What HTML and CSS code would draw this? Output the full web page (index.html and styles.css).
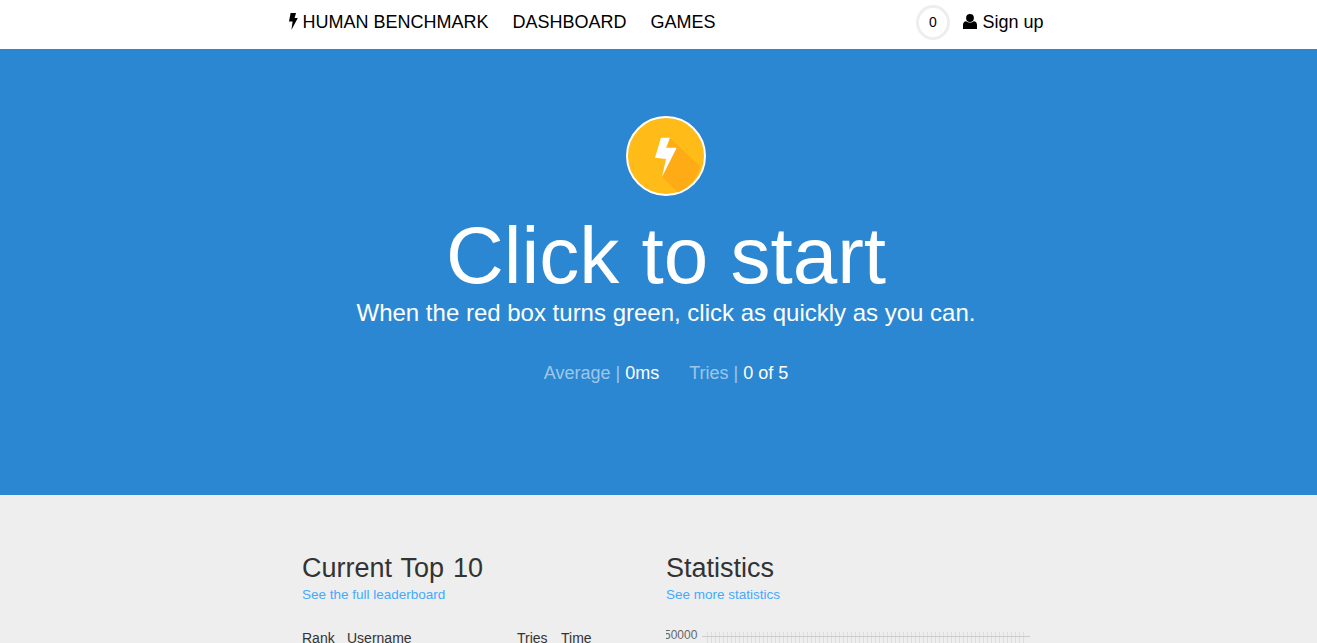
FILE: index.html
```html
<!DOCTYPE html>
<html lang="en">
  <head>
    <meta charset="UTF-8" />
    <title>Reaction Time Test</title>
    <link rel="stylesheet" href="styles.css">
  </head>
  <body>
    <nav class="navbar">
      <div class="nav-inner">
        <div class="nav-links">
          <a class="brand" href="#">
            <svg class="bolt-small" viewBox="0 0 10 17"><path d="M2.6 0H8L6.6 5H9.8L3.4 17 4.6 8.4H1Z"/></svg>
            HUMAN BENCHMARK
          </a>
          <a href="#">DASHBOARD</a>
          <a href="#">GAMES</a>
        </div>
        <div class="nav-user">
          <div class="badge">0</div>
          <a href="#">
            <svg class="user-icon" viewBox="0 0 14 15"><circle cx="7" cy="4" r="3.9"/><path d="M0 15V10.8C0 8.8 1.3 7.2 3.2 7.2 4.2 8 5.5 8.5 7 8.5S9.8 8 10.8 7.2C12.7 7.2 14 8.8 14 10.8V15Z"/></svg>
            Sign up
          </a>
        </div>
      </div>
    </nav>

    <section class="hero">
      <svg class="logo" viewBox="0 0 80 80">
        <circle cx="40" cy="40" r="39" fill="#ffbb17" stroke="#fff" stroke-width="2"/>
        <path d="M44 22 73.6 50A38 38 0 0 1 52 76.4L36 61Z" fill="#ffab16"/>
        <path d="M35 21.7H44L40 31.7H50.7L36 61 40 43 29 41.7Z" fill="#fff"/>
      </svg>
      <h1>Click to start</h1>
      <p class="lead">When the red box turns green, click as quickly as you can.</p>
      <div class="scores">
        <span><span class="dim">Average |</span> 0ms</span>
        <span><span class="dim">Tries |</span> 0 of 5</span>
      </div>
    </section>

    <section class="panels">
      <div class="panel">
        <h2>Current Top 10</h2>
        <a class="more" href="#">See the full leaderboard</a>
        <table class="top">
          <tr>
            <th class="rank">Rank</th>
            <th class="user">Username</th>
            <th class="tries">Tries</th>
            <th>Time</th>
          </tr>
        </table>
      </div>
      <div class="panel">
        <h2>Statistics</h2>
        <a class="more" href="#">See more statistics</a>
        <div class="chart">
          <span class="chart-label">50000</span>
          <div class="chart-grid"></div>
        </div>
      </div>
    </section>
  </body>
</html>
```

FILE: styles.css
```css
html,
body {
  height: 643px;
  overflow: hidden;
}
body {
  margin: 0;
  font-family: "Liberation Sans", Arial, sans-serif;
  background-color: #eeeeee;
  color: #333333;
}
a {
  color: inherit;
  text-decoration: none;
}
.navbar {
  height: 49px;
  background: white;
}
.nav-inner {
  width: 756px;
  margin: 0 auto;
  padding-left: 14px;
  height: 44px;
  display: flex;
  align-items: center;
  justify-content: space-between;
  font-size: 18px;
  color: black;
}
.nav-links {
  display: flex;
  gap: 24px;
}
.bolt-small {
  width: 10px;
  height: 17px;
  vertical-align: -2px;
}
.nav-user {
  display: flex;
  align-items: center;
  gap: 13px;
}
.badge {
  box-sizing: border-box;
  width: 34px;
  height: 35px;
  padding-right: 1px;
  border: 3px solid #eeeeee;
  border-radius: 50%;
  font-size: 14px;
  display: flex;
  align-items: center;
  justify-content: center;
}
.user-icon {
  width: 14px;
  height: 15px;
  vertical-align: -1px;
}
.hero {
  height: 446px;
  background-color: #2b87d1;
  color: white;
  text-align: center;
  box-sizing: border-box;
  padding: 67px 0 0 15px;
}
.logo {
  display: block;
  width: 80px;
  height: 80px;
  margin: 0 auto;
}
.hero h1 {
  margin: 20px 0 0;
  font-size: 80px;
  font-weight: normal;
  line-height: 80px;
}
.lead {
  margin: 0;
  font-size: 24px;
  line-height: 34px;
}
.scores {
  margin-top: 30px;
  font-size: 18px;
  line-height: 26px;
  display: flex;
  justify-content: center;
  gap: 30px;
}
.dim {
  color: rgba(255, 255, 255, 0.55);
}
.panels {
  width: 728px;
  margin: 0 auto;
  padding: 55px 0 0 15px;
  display: flex;
}
.panel {
  width: 364px;
}
.panel h2 {
  margin: 0;
  font-size: 27px;
  font-weight: normal;
  line-height: 36px;
  word-spacing: 1.5px;
}
.more {
  display: block;
  padding-top: 1px;
  color: #44aaff;
  font-size: 13.5px;
  line-height: 16px;
}
.top {
  margin-top: 27px;
  border-collapse: collapse;
  font-size: 14px;
}
.top th {
  padding: 0;
  font-weight: normal;
  text-align: left;
}
.rank {
  width: 45px;
}
.user {
  width: 170px;
}
.tries {
  width: 44px;
}
/* label is cut on the left, like in the real chart */
.chart {
  margin-top: 25px;
  display: flex;
  align-items: flex-start;
  gap: 5px;
  overflow: hidden;
  font-size: 12px;
  line-height: 14px;
  color: #666666;
}
.chart-label {
  margin-left: -2px;
}
.chart-grid {
  width: 328px;
  height: 40px;
  margin-top: 4px;
  background-image:
    linear-gradient(#cccccc, #cccccc),
    repeating-linear-gradient(to right, #dddddd 0, #dddddd 1px, transparent 1px, transparent 4px);
  background-size: 100% 1px, 318px 100%;
  background-position: 0 4px, 5px 0;
  background-repeat: no-repeat;
}
```
